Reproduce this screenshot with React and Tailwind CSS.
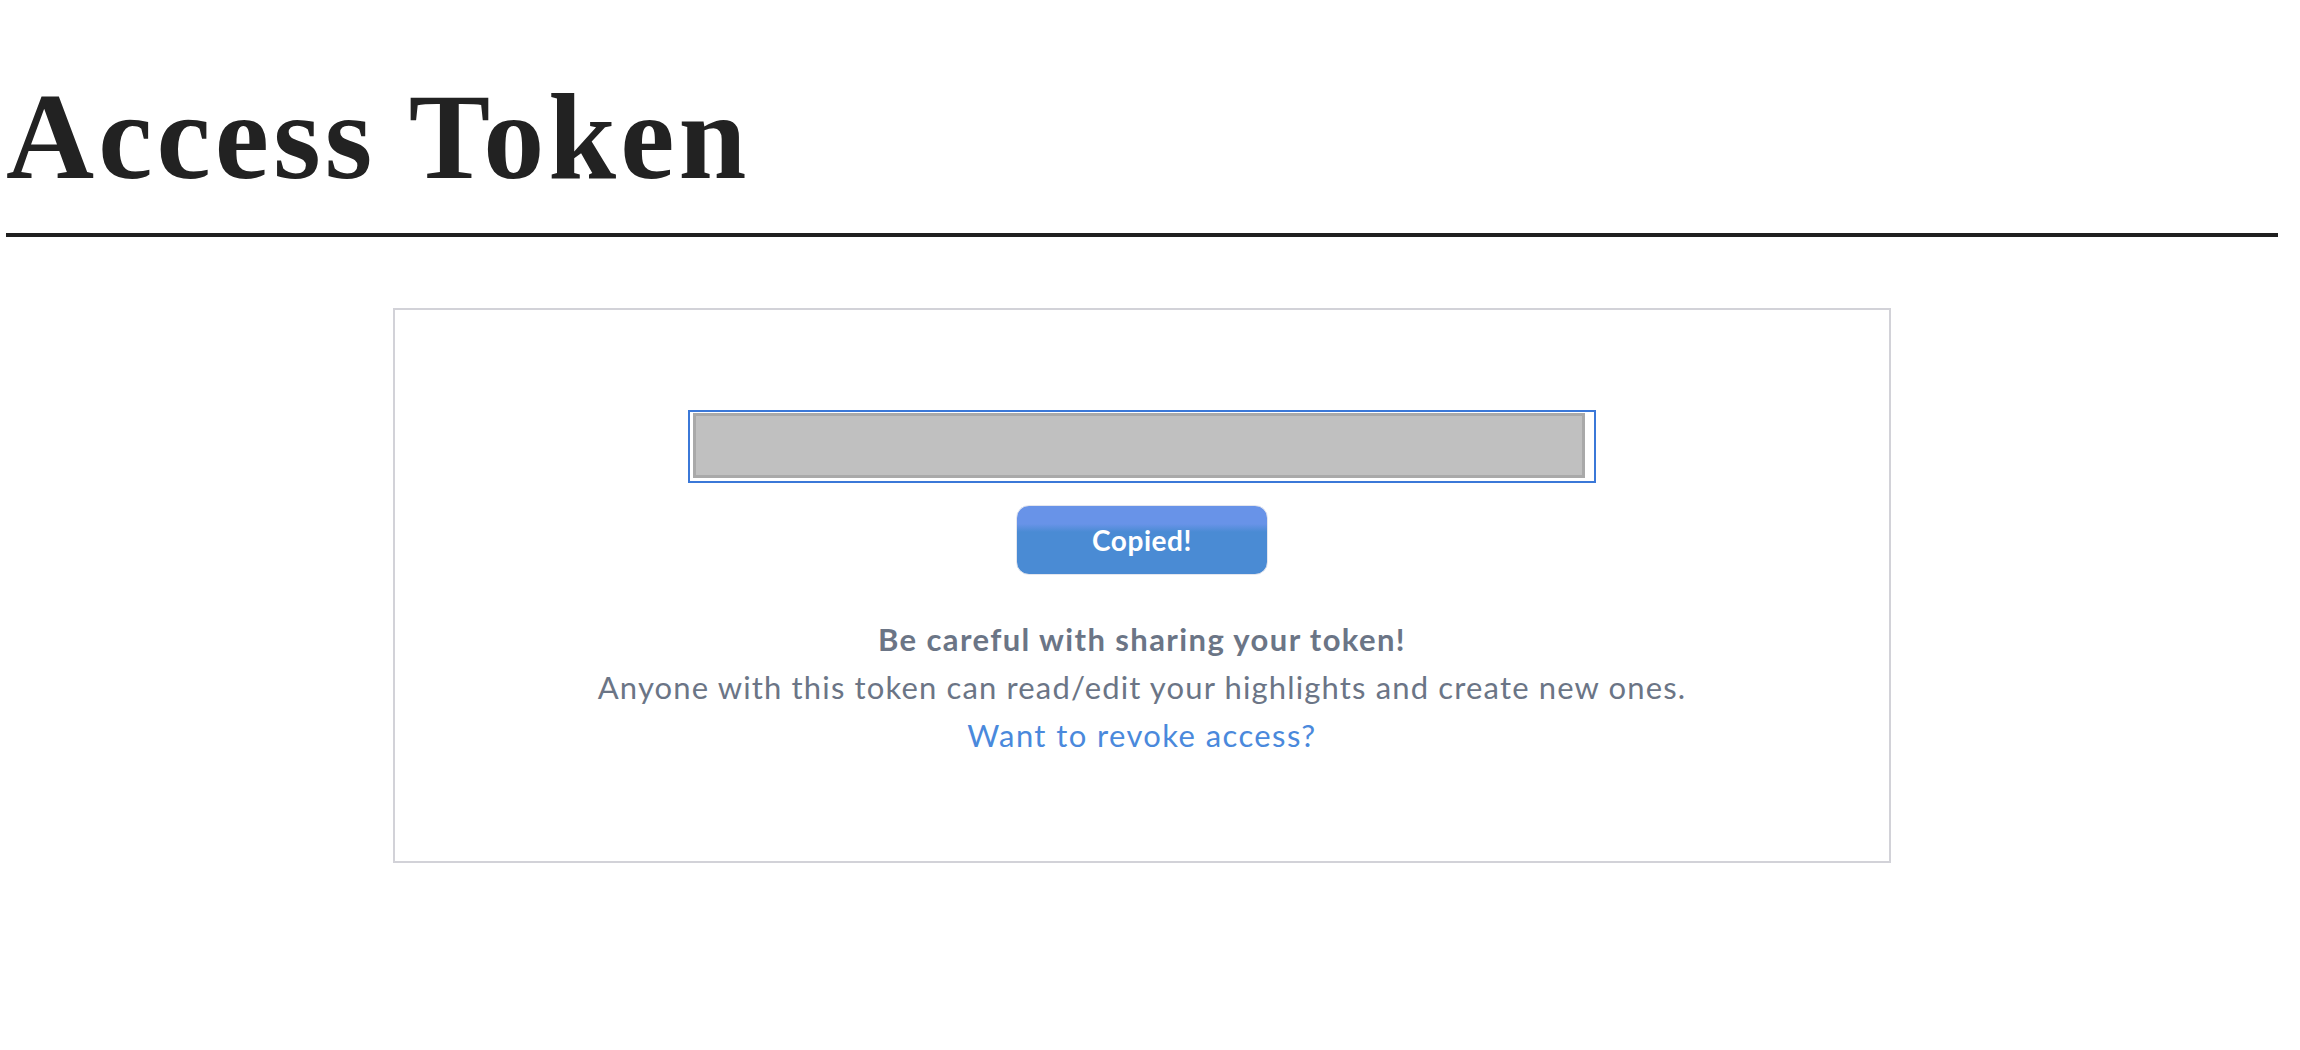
import React from 'react';

const TokenField = () => {
  return (
    <div className="border-2 border-[#3b78d8] pt-[1px] pl-[3px] pr-[9px] pb-[3px] w-[908px]">
      <div className="h-[65px] border-[3px] border-[#a9a9a9] bg-[#c0c0c0]" />
    </div>
  );
};

const CopyButton = () => {
  return (
    <button className="mt-[22px] w-[252px] h-[70px] rounded-[13px] border border-[#e4e6ee] bg-[linear-gradient(to_bottom,#6893e8_0px,#6893e8_18px,#4a8bd4_26px,#4a8bd4_100%)] text-white font-bold text-[28px] tracking-[0.02em] font-['Lato',sans-serif]">
      Copied!
    </button>
  );
};

export default function App() {
  return (
    <div className="min-h-screen bg-white">
      <div className="ml-[6px] w-[2272px]">
        {/* Title */}
        <h1 className="pt-[76px] text-[122px] leading-none font-bold tracking-[0.034em] text-[#222222] font-['Liberation_Serif',serif]">
          Access Token
        </h1>
        <div className="mt-[35px] h-[4px] bg-[#1f1f1f]" />

        {/* Token card */}
        <div className="mt-[71px] mx-auto w-[1498px] border-2 border-[#d2d2d8] flex flex-col items-center pt-[100px] pb-[102px]">
          <TokenField />
          <CopyButton />
          <div className="mt-[40px] text-center text-[31px] leading-[48px] text-[#6b7586] font-['Lato',sans-serif]">
            <p className="font-bold tracking-[0.045em]">Be careful with sharing your token!</p>
            <p className="tracking-[0.037em]">Anyone with this token can read/edit your highlights and create new ones.</p>
            <a href="#" className="tracking-[0.045em] text-[#4a89dc]">Want to revoke access?</a>
          </div>
        </div>
      </div>
    </div>
  );
}
